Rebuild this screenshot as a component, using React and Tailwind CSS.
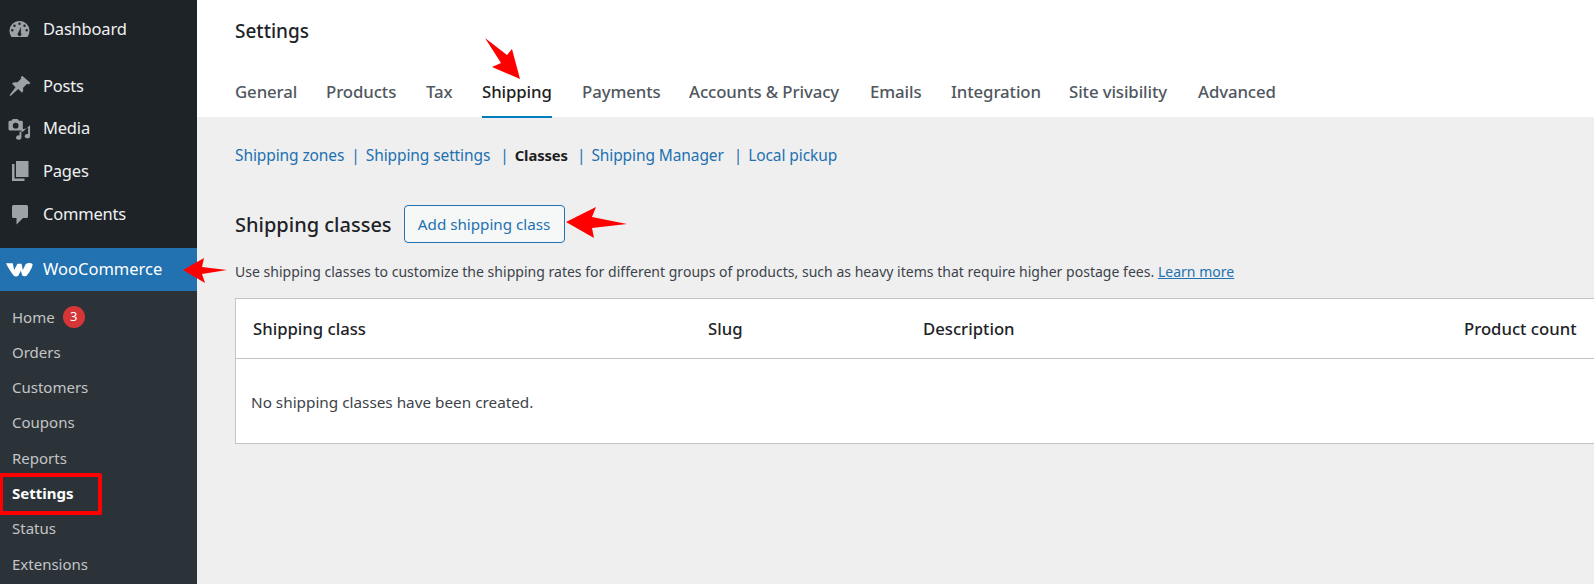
import { Fragment } from "react";

const font = { fontFamily: '"Noto Sans", sans-serif' };

const tabs = [
  { label: "General", width: "w-[91px]" },
  { label: "Products", width: "w-[100px]" },
  { label: "Tax", width: "w-[56px]" },
  { label: "Shipping", width: "w-[100px]", active: true },
  { label: "Payments", width: "w-[107px]" },
  { label: "Accounts & Privacy", width: "w-[181px]" },
  { label: "Emails", width: "w-[81px]" },
  { label: "Integration", width: "w-[118px]" },
  { label: "Site visibility", width: "w-[129px]" },
  { label: "Advanced", width: "" },
];

const subLinks = [
  { label: "Shipping zones" },
  { label: "Shipping settings", sep: "pl-[7px]" },
  { label: "Classes", current: true, sep: "pl-[10px]" },
  { label: "Shipping Manager", sep: "pl-[9px]" },
  { label: "Local pickup", sep: "pl-[10px]" },
];

const submenu = ["Orders", "Customers", "Coupons", "Reports", "Settings", "Status", "Extensions"];

function DashboardIcon() {
  return (
    <svg viewBox="0 0 20 18" className="h-[18px] w-[21px]" fill="#9ca2a7">
      <path fillRule="evenodd" d="M10 1a9.6 9.6 0 0 0-10 9.6c0 2.6.8 4.8 2 6.4h16c1.2-1.6 2-3.8 2-6.4A9.6 9.6 0 0 0 10 1zM10 2.5a1.2 1.2 0 1 1 0 2.4 1.2 1.2 0 0 1 0-2.4zM5 4.5a1.2 1.2 0 1 1 0 2.400 1.2 1.2 0 0 1 0-2.400zM15 4.500a1.200 1.200 0 1 1 0 2.400 1.200 1.200 0 0 1 0-2.400zM2.800 9a1.200 1.200 0 1 1 0 2.400 1.200 1.200 0 0 1 0-2.400zM17.200 9a1.200 1.200 0 1 1 0 2.400 1.200 1.200 0 0 1 0-2.400zM11.500 7l-.2 5.800a1.900 1.900 0 1 1-2.600 0z" />
    </svg>
  );
}

function PinIcon() {
  return (
    <svg viewBox="0 0 22 22" className="h-[22px] w-[23px]" fill="#9ca2a7">
      <path d="M14 1l8 7-2 1.500-1.500-.8-4 4.300c.5 2 .2 3.500-1 4.800l-3.800-3.700L2 21l-1-.8 6-8L3.500 8.500C5 7.300 6.800 7 8.800 7.600l4-4.200-.6-1.300z" />
    </svg>
  );
}

function MediaIcon() {
  return (
    <svg viewBox="0 0 24 24" className="h-[23px] w-[23px]" fill="#9ca2a7">
      <path fillRule="evenodd" d="M5 2h5l1.500 2H14a1.500 1.500 0 0 1 1.500 1.500V14H2a1.500 1.500 0 0 1-1.500-1.500v-7A1.500 1.500 0 0 1 2 4h1.500zM8 6a3 3 0 1 0 0 6 3 3 0 0 0 0-6z" />
      <path d="M23 8.500V20a2.800 2.300 0 1 1-2-2.200V11.500l-7 1.500V21.500a2.800 2.300 0 1 1-2-2.200V15.500h3.500z" />
    </svg>
  );
}

function PagesIcon() {
  return (
    <svg viewBox="0 0 18 22" className="h-[22px] w-[18px]" fill="#9ca2a7">
      <path d="M5 1h12.500v16H5z" />
      <path d="M3.500 4H1v17h12.500v-2.500H3.500z" />
    </svg>
  );
}

function CommentIcon() {
  return (
    <svg viewBox="0 0 18 21" className="h-[21px] w-[18px]" fill="#9ca2a7">
      <path d="M2.500 1h13A1.500 1.500 0 0 1 17 2.500v10a1.500 1.500 0 0 1-1.500 1.500H12l-6.500 6.500V14h-3A1.500 1.500 0 0 1 1 12.500v-10A1.500 1.500 0 0 1 2.500 1z" />
    </svg>
  );
}

function WooIcon() {
  return (
    <svg viewBox="0 0 26 14" className="h-[15px] w-[27px]" fill="#fff">
      <path d="M0 1h6.500l1.400 6.500L11 1.500h4l1.200 6L19 1.800c1.500-1.200 5-1.500 6.500-.2.700 2-3 8.700-5.600 11.400-1.400.8-3.300.8-4.200-.2l-1.400-4.600-2.500 4.700c-1 1-3 1-4.300.1C5 10 1.800 5 0 1z" />
    </svg>
  );
}

function MenuItem({ icon, label, active }) {
  return (
    <div className={"flex h-[42.7px] items-center " + (active ? "bg-[#2271b1] text-white" : "text-[#f0f0f1]")}>
      <span className="mr-[4px] flex w-[39px] shrink-0 justify-center">{icon}</span>
      <span className={"text-[16.5px] " + (active ? "tracking-[0px]" : "tracking-[-0.2px]")}>{label}</span>
    </div>
  );
}

function Sidebar() {
  return (
    <aside className="w-[197px] shrink-0 bg-[#1d2327]">
      <div className="pt-[8px]">
        <MenuItem icon={<DashboardIcon />} label="Dashboard" />
      </div>
      <div className="pt-[14px]">
        <MenuItem icon={<PinIcon />} label="Posts" />
        <MenuItem icon={<MediaIcon />} label="Media" />
        <MenuItem icon={<PagesIcon />} label="Pages" />
        <MenuItem icon={<CommentIcon />} label="Comments" />
      </div>
      <div className="pt-[13px]">
        <MenuItem icon={<WooIcon />} label="WooCommerce" active />
      </div>
      <div className="bg-[#2c3338] pt-[8px] pb-[10px]">
        <div className="flex h-[35.3px] items-center pl-[12px] text-[15px] text-[#c3c4c7]">
          Home
          <span className="ml-[8px] flex h-[22px] w-[22px] items-center justify-center rounded-full bg-[#d63638] text-[13px] text-white">3</span>
        </div>
        {submenu.map((item) => (
          <div
            key={item}
            className={
              "flex h-[35.3px] items-center pl-[12px] text-[15px] " +
              (item === "Settings" ? "font-bold text-white" : "text-[#c3c4c7]")
            }
          >
            {item}
          </div>
        ))}
      </div>
    </aside>
  );
}

export default function App() {
  return (
    <div className="relative flex h-[584px] w-[1594px] overflow-hidden bg-[#efefef]" style={font}>
      <Sidebar />

      <main className="min-w-0 flex-1">
        <header className="h-[117px] bg-white pl-[38px]">
          <h1 className="pt-[18px] text-[19px] leading-[26px] font-medium text-[#1d2327]">Settings</h1>
          <nav className="mt-[26px] flex">
            {tabs.map((tab) => (
              <div key={tab.label} className={"shrink-0 " + tab.width}>
                <span
                  className={
                    "inline-block h-[48px] pt-[10px] text-[16.8px] leading-[24px] font-medium tracking-[-0.1px] " +
                    (tab.active ? "border-b-2 border-[#007cba] text-[#1e1e1e]" : "text-[#50575e]")
                  }
                >
                  {tab.label}
                </span>
              </div>
            ))}
          </nav>
        </header>

        <div className="pl-[38px]">
          <div className="flex pt-[27px] text-[15.5px] leading-[22px] tracking-[-0.1px] text-[#2271b1]">
            {subLinks.map((link) => (
              <Fragment key={link.label}>
                {link.sep && <span className={link.sep + " pr-[6px]"}>|</span>}
                <span className={link.current ? "text-[14.8px] font-bold text-[#1e1e1e]" : ""}>{link.label}</span>
              </Fragment>
            ))}
          </div>

          <div className="mt-[39px] flex items-center">
            <h2 className="pt-[1px] text-[20px] leading-[26px] font-medium text-[#1d2327]">Shipping classes</h2>
            <button className="ml-[12px] h-[38px] w-[161px] rounded-[4px] border border-[#2271b1] bg-[#f6f7f7] text-[15.2px] text-[#2271b1]">
              Add shipping class
            </button>
          </div>

          <p className="mt-[19px] text-[14px] leading-[20px] tracking-[0.02px] whitespace-nowrap text-[#3c434a]">
            Use shipping classes to customize the shipping rates for different groups of products, such as heavy items that require higher postage fees.{" "}
            <span className="text-[#2271b1] underline">Learn more</span>
          </p>

          <div className="mt-[16px] h-[146px] w-[1400px] border border-[#c3c4c7] bg-white">
            <div className="flex h-[60px] items-center border-b border-[#c3c4c7] pl-[17px] text-[16.7px] font-medium text-[#1d2327]">
              <span className="w-[455px]">Shipping class</span>
              <span className="w-[215px]">Slug</span>
              <span className="w-[541px]">Description</span>
              <span>Product count</span>
            </div>
            <p className="pt-[33px] pl-[15px] text-[15.3px] leading-[20px] text-[#3c434a]">No shipping classes have been created.</p>
          </div>
        </div>
      </main>

      {/* red annotation arrows drawn over the screenshot */}
      <svg viewBox="0 0 44 27" className="pointer-events-none absolute top-[257px] left-[183px] h-[27px] w-[44px]" fill="#ff0000">
        <polygon points="0,13 21,1 19,10 44,13 19,17 22,26" />
      </svg>
      <svg viewBox="0 0 62 33" className="pointer-events-none absolute top-[206px] left-[565px] h-[33px] w-[62px]" fill="#ff0000">
        <polygon points="1,16 31,1 27,11 62,18 27,22 29,32" />
      </svg>
      <svg viewBox="0 0 40 44" className="pointer-events-none absolute top-[37px] left-[483px] h-[44px] w-[40px]" fill="#ff0000">
        <polygon points="2,1 24,18 29,12 37,42 9,30 18,26" />
      </svg>
      <div className="absolute top-[473px] -left-[1px] h-[42px] w-[103px] rounded-[2px] border-[4px] border-[#ff0000]" />
    </div>
  );
}
